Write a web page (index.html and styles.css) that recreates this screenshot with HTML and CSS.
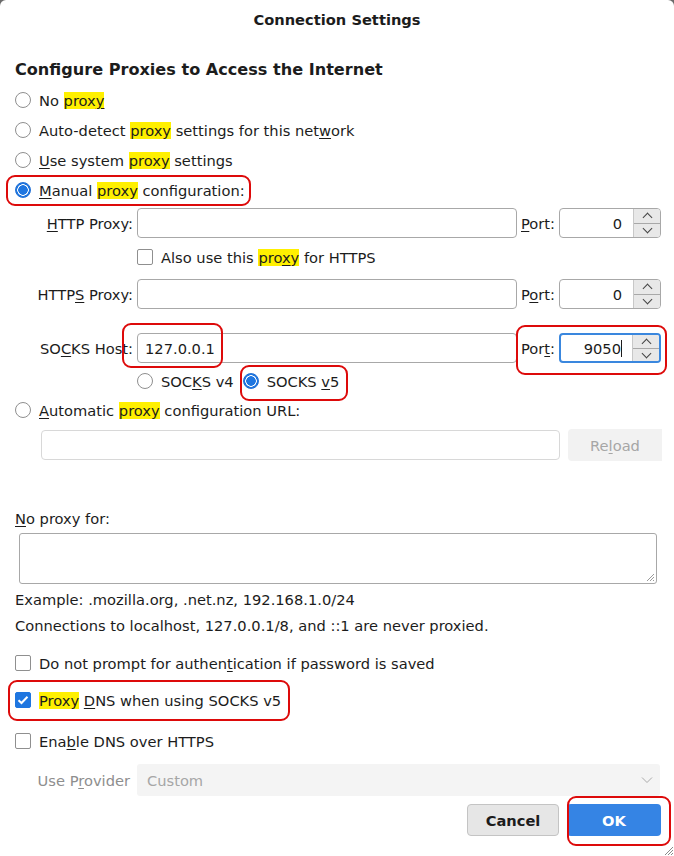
FILE: index.html
```html
<!DOCTYPE html>
<html lang="en">

<head>
    <meta charset="UTF-8">
    <meta name="viewport" content="width=device-width, initial-scale=1.0">
    <title>Connection Settings</title>
    <link rel="stylesheet" href="styles.css">
</head>

<body>
    <div class="dialog">
        <div class="titlebar">Connection Settings</div>

        <div class="content">
            <h1 class="heading">Configure Proxies to Access the Internet</h1>

            <div class="option">
                <span class="radio"></span>
                <span>No <mark>prox<u>y</u></mark></span>
            </div>
            <div class="option">
                <span class="radio"></span>
                <span>Auto-detect <mark>proxy</mark> settings for this net<u>w</u>ork</span>
            </div>
            <div class="option">
                <span class="radio"></span>
                <span><u>U</u>se system <mark>proxy</mark> settings</span>
            </div>
            <div class="option">
                <span class="radio checked"></span>
                <span><u>M</u>anual <mark>proxy</mark> configuration:</span>
            </div>

            <div class="proxy-row first">
                <label class="row-label"><u>H</u>TTP Proxy:</label>
                <div class="field"></div>
                <label class="port-label"><u>P</u>ort:</label>
                <div class="spinner">
                    <span class="spin-value">0</span>
                    <span class="spin-buttons"><span class="up"></span><span class="down"></span></span>
                </div>
            </div>

            <div class="option indented also">
                <span class="checkbox"></span>
                <span>Also use this <mark>pro<u>x</u>y</mark> for HTTPS</span>
            </div>

            <div class="proxy-row">
                <label class="row-label">HTTP<u>S</u> Proxy:</label>
                <div class="field"></div>
                <label class="port-label">P<u>o</u>rt:</label>
                <div class="spinner">
                    <span class="spin-value">0</span>
                    <span class="spin-buttons"><span class="up"></span><span class="down"></span></span>
                </div>
            </div>

            <div class="proxy-row socks">
                <label class="row-label">SO<u>C</u>KS Host:</label>
                <div class="field">127.0.0.1</div>
                <label class="port-label">Por<u>t</u>:</label>
                <div class="spinner focused">
                    <span class="spin-value">9050<i class="caret"></i></span>
                    <span class="spin-buttons"><span class="up"></span><span class="down"></span></span>
                </div>
            </div>

            <div class="socks-versions">
                <div class="option">
                    <span class="radio"></span>
                    <span>SOC<u>K</u>S v4</span>
                </div>
                <div class="option">
                    <span class="radio checked"></span>
                    <span>SOCKS <u>v</u>5</span>
                </div>
            </div>

            <div class="option">
                <span class="radio"></span>
                <span><u>A</u>utomatic <mark>proxy</mark> configuration URL:</span>
            </div>

            <div class="autoconfig">
                <div class="field disabled"></div>
                <button class="reload" disabled>Re<u>l</u>oad</button>
            </div>

            <p class="noproxy-label"><u>N</u>o proxy for:</p>
            <div class="textarea">
                <svg class="grip" width="10" height="10" viewBox="0 0 10 10">
                    <path d="M9 2 L2 9 M9 5 L5 9 M9 8 L8 9" stroke="#9a9a9a" stroke-width="1" />
                </svg>
            </div>
            <p class="hint">Example: .mozilla.org, .net.nz, 192.168.1.0/24</p>
            <p class="hint second">Connections to localhost, 127.0.0.1/8, and ::1 are never proxied.</p>

            <div class="option check-row">
                <span class="checkbox"></span>
                <span>Do not prompt for authen<u>t</u>ication if password is saved</span>
            </div>
            <div class="option check-row dns">
                <span class="checkbox checked">
                    <svg width="12" height="10" viewBox="0 0 12 10">
                        <path d="M1.5 5.2 L4.5 8 L10.5 1.8" fill="none" stroke="#fff" stroke-width="2" />
                    </svg>
                </span>
                <span><mark>Proxy</mark> <u>D</u>NS when using SOCKS v5</span>
            </div>
            <div class="option check-row doh">
                <span class="checkbox"></span>
                <span>Ena<u>b</u>le DNS over HTTPS</span>
            </div>

            <div class="provider">
                <label class="row-label">Use P<u>r</u>ovider</label>
                <div class="select">
                    <span>Custom</span>
                    <svg width="12" height="8" viewBox="0 0 12 8">
                        <path d="M1 1.5 L6 6.5 L11 1.5" fill="none" stroke="#aaa" stroke-width="1" />
                    </svg>
                </div>
            </div>

            <div class="actions">
                <button class="btn cancel">Cancel</button>
                <button class="btn ok">OK</button>
            </div>
        </div>

        <svg class="resize" width="12" height="12" viewBox="0 0 12 12">
            <path d="M11 3 L3 11 M11 6 L6 11 M11 9 L9 11" stroke="#8a8a8a" stroke-width="1" />
        </svg>

        <!-- red marks drawn over the screenshot -->
        <div class="mark-box m-manual"></div>
        <div class="mark-box m-host"></div>
        <div class="mark-box m-port"></div>
        <div class="mark-box m-v5"></div>
        <div class="mark-box m-dns"></div>
        <div class="mark-box m-ok"></div>
    </div>
</body>

</html>
```

FILE: styles.css
```css
* {
    box-sizing: border-box;
}

body {
    margin: 0;
    background: #6b6b6b;
}

.dialog {
    position: relative;
    width: 674px;
    height: 856px;
    background: #fff;
    border-radius: 6px 6px 0 0;
    overflow: hidden;

    font-family: 'DejaVu Sans', sans-serif;
    font-size: 14.67px;
    color: #1c1c1c;
}

u {
    text-decoration-thickness: 1px;
    text-underline-offset: 2px;
}

mark {
    background: #fff000;
    color: inherit;
}

.titlebar {
    height: 38px;
    display: flex;
    align-items: center;
    justify-content: center;
    font-weight: bold;
}

.content {
    padding: 0 13px 0 15px;
}

.heading {
    margin: 21px 0 4px;
    height: 22px;
    font-size: 16.1px;
    font-weight: bold;
    line-height: 22px;
}

.option {
    height: 30px;
    display: flex;
    align-items: center;
    gap: 8px;
    white-space: nowrap;
}

.radio {
    width: 16px;
    height: 16px;
    flex-shrink: 0;
    border-radius: 50%;
    border: 1px solid #8f8f8f;
    background: #fff;

    &.checked {
        border-color: #1f6fd6;
        background: radial-gradient(circle, #1f76e0 0 4.5px, #fff 5px 5.5px, #1f76e0 6px);
    }
}

.checkbox {
    width: 16px;
    height: 16px;
    flex-shrink: 0;
    border-radius: 2px;
    border: 1px solid #8f8f8f;
    background: #fff;

    display: flex;
    align-items: center;
    justify-content: center;

    &.checked {
        border-color: #1f76e0;
        background: #1f76e0;
    }
}

.proxy-row {
    height: 30px;
    display: flex;
    align-items: center;
    margin-top: 3px;

    &.socks {
        margin-top: 24px;
    }
}

.row-label {
    width: 118px;
    flex-shrink: 0;
    text-align: right;
    margin-right: 4px;
    white-space: nowrap;
}

.field {
    width: 380px;
    height: 30px;
    flex-shrink: 0;
    border: 1px solid #a8a8a8;
    border-radius: 4px;
    padding: 0 7px;
    display: flex;
    align-items: center;

    &.disabled {
        width: 519px;
        border-color: #d8d8d8;
    }
}

.port-label {
    width: 42px;
    padding-left: 4px;
    flex-shrink: 0;
}

.spinner {
    width: 102px;
    height: 30px;
    flex-shrink: 0;
    border: 1px solid #a8a8a8;
    border-radius: 4px;
    display: flex;
    overflow: hidden;

    &.focused {
        border: 2px solid #3a87de;
    }
}

.spin-value {
    flex: 1;
    display: flex;
    align-items: center;
    justify-content: flex-end;
    padding-right: 11px;
}

.focused .spin-value {
    padding-right: 10px;
}

.caret {
    display: inline-block;
    width: 1px;
    height: 17px;
    background: #1c1c1c;
}

.spin-buttons {
    width: 27px;
    display: flex;
    flex-direction: column;
    border-left: 1px solid #c8c8c8;

    span {
        flex: 1;
        background: #e8e8e8;
        position: relative;
    }

    .up {
        border-bottom: 1px solid #a8a8a8;
    }

    span::after {
        content: '';
        position: absolute;
        left: 10px;
        width: 6px;
        height: 6px;
        border-left: 1px solid #444;
        border-top: 1px solid #444;
    }

    .up::after {
        top: 5px;
        transform: rotate(45deg);
    }

    .down::after {
        top: 1px;
        transform: rotate(-135deg);
    }
}

.indented {
    padding-left: 122px;
}

.also {
    height: 38px;
}

.socks-versions {
    display: flex;
    gap: 9px;
    padding-left: 122px;
    height: 29px;
    margin-top: 3px;
}

.autoconfig {
    display: flex;
    align-items: center;
    gap: 8px;
    margin-left: 26px;
    margin-top: 5px;
    height: 30px;

    .reload {
        width: 94px;
        height: 32px;
        flex-shrink: 0;
        border: none;
        border-radius: 4px 0 0 4px;
        background: #f2f2f2;
        color: #a6a6a6;
        font-family: inherit;
        font-size: 14.67px;
    }
}

.noproxy-label {
    margin: 49px 0 0;
    line-height: 20px;
}

.textarea {
    position: relative;
    margin: 4px 0 0 4px;
    width: 638px;
    height: 51px;
    border: 1px solid #a8a8a8;
    border-radius: 3px;

    .grip {
        position: absolute;
        right: 1px;
        bottom: 1px;
    }
}

.hint {
    margin: 6px 0 0;
    line-height: 20px;

    &.second {
        margin-top: 6px;
    }
}

.check-row {
    height: 30px;
    margin-top: 12px;

    &.dns {
        margin-top: 7px;
    }

    &.doh {
        margin-top: 11px;
    }
}

.provider {
    display: flex;
    align-items: center;
    margin-top: 8px;
    color: #8e8e8e;

    .row-label {
        width: 115px;
        margin-right: 7px;
    }
}

.select {
    width: 523px;
    height: 32px;
    background: #f4f4f4;
    border-radius: 3px;
    display: flex;
    align-items: center;
    justify-content: space-between;
    padding: 0 7px 0 10px;
    color: #a6a6a6;
}

.actions {
    display: flex;
    justify-content: flex-end;
    gap: 8px;
    margin-top: 8px;

    .btn {
        width: 92px;
        height: 32px;
        border-radius: 4px;
        font-family: inherit;
        font-size: 14.67px;
        font-weight: bold;
    }

    .cancel {
        border: 1px solid #c4c4c4;
        background: #e6e6e6;
        color: #1c1c1c;
    }

    .ok {
        width: 94px;
        border: none;
        background: #3584e4;
        color: #fff;
    }
}

.resize {
    position: absolute;
    right: 0;
    bottom: 0;
}

.mark-box {
    position: absolute;
    border: 2px solid #dd0a0a;
    border-radius: 9px;
}

.m-manual {
    left: 6px;
    top: 175px;
    width: 245px;
    height: 31px;
}

.m-host {
    left: 122px;
    top: 323px;
    width: 101px;
    height: 45px;
}

.m-port {
    left: 516px;
    top: 325px;
    width: 151px;
    height: 50px;
}

.m-v5 {
    left: 240px;
    top: 365px;
    width: 108px;
    height: 36px;
}

.m-dns {
    left: 8px;
    top: 680px;
    width: 282px;
    height: 41px;
}

.m-ok {
    left: 567px;
    top: 796px;
    width: 104px;
    height: 50px;
}
```
